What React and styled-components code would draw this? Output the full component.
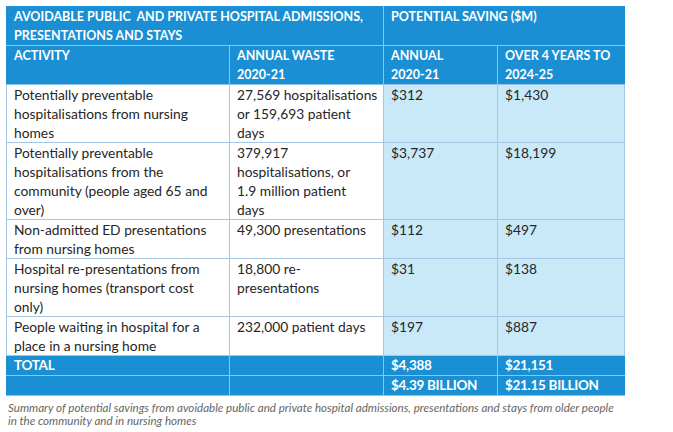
import React from "react";
import styled, { createGlobalStyle } from "styled-components";

const Global = createGlobalStyle`
  html, body { margin: 0; padding: 0; background: #ffffff; }
  body { font-family: Lato, "Liberation Sans", sans-serif; }
`;

const Page = styled.div`
  width: 673px;
  height: 432px;
  padding: 6px 0 0 6px;
  box-sizing: border-box;
`;

const Table = styled.table`
  width: 618px;
  border-collapse: collapse;
  table-layout: fixed;
  font-family: Lato, "Liberation Sans", sans-serif;
`;

const HeadCell = styled.th`
  background: #1b8fd3;
  color: #ffffff;
  font-weight: 700;
  font-size: 12.5px;
  line-height: 19px;
  text-align: left;
  vertical-align: top;
  padding: 0 5px 0 7px;
  border: 1px solid #8fc3ea;
  border-top-color: #1b8fd3;
  &:first-child { border-left-color: #1b8fd3; }
  &:last-child { border-right-color: #1b8fd3; }
`;

const Cell = styled.td`
  background: ${(p) => (p.$tint ? "#c9e9f9" : "#ffffff")};
  color: #262626;
  font-size: 13.8px;
  line-height: 19px;
  text-align: left;
  vertical-align: top;
  padding: 0 5px 0 7px;
  border: 1px solid #a7c6e4;
`;

const Line = styled.span`
  display: block;
`;

const TotalCell = styled.td`
  background: #1b8fd3;
  color: #ffffff;
  font-weight: 700;
  font-size: 13.5px;
  letter-spacing: -0.3px;
  line-height: 19px;
  text-align: left;
  vertical-align: top;
  padding: 0 5px 0 7px;
  border: 1px solid #8fc3ea;
  &:first-child { border-left-color: #1b8fd3; }
  &:last-child { border-right-color: #1b8fd3; }
`;

const Caption = styled.p`
  margin: 5px 0 0 2px;
  width: 610px;
  font-family: Lato, "Liberation Sans", sans-serif;
  font-style: italic;
  font-weight: 400;
  font-size: 11.6px;
  line-height: 13px;
  color: #666666;
`;

const rows = [
  {
    activity: "Potentially preventable hospitalisations from nursing homes",
    waste: ["27,569 hospitalisations or 159,693 patient days"],
    annual: "$312",
    four: "$1,430",
  },
  {
    activity:
      "Potentially preventable hospitalisations from the community (people aged 65 and over)",
    waste: ["379,917", "hospitalisations, or", "1.9 million patient", "days"],
    annual: "$3,737",
    four: "$18,199",
  },
  {
    activity: "Non-admitted ED presentations from nursing homes",
    waste: ["49,300 presentations"],
    annual: "$112",
    four: "$497",
  },
  {
    activity:
      "Hospital re-presentations from nursing homes (transport cost only)",
    waste: ["18,800 re-presentations"],
    annual: "$31",
    four: "$138",
  },
  {
    activity: "People waiting in hospital for a place in a nursing home",
    waste: ["232,000 patient days"],
    annual: "$197",
    four: "$887",
  },
];

export default function App() {
  return (
    <Page>
      <Global />
      <Table>
        <colgroup>
          <col style={{ width: 223 }} />
          <col style={{ width: 154 }} />
          <col style={{ width: 114 }} />
          <col style={{ width: 127 }} />
        </colgroup>
        <thead>
          <tr>
            <HeadCell colSpan={2}>
              AVOIDABLE PUBLIC&nbsp; AND PRIVATE HOSPITAL ADMISSIONS, PRESENTATIONS AND STAYS
            </HeadCell>
            <HeadCell colSpan={2}>POTENTIAL SAVING ($M)</HeadCell>
          </tr>
          <tr>
            <HeadCell>ACTIVITY</HeadCell>
            <HeadCell>
              ANNUAL WASTE
              <br />
              2020-21
            </HeadCell>
            <HeadCell>
              ANNUAL
              <br />
              2020-21
            </HeadCell>
            <HeadCell>
              OVER 4 YEARS TO
              <br />
              2024-25
            </HeadCell>
          </tr>
        </thead>
        <tbody>
          {rows.map((r) => (
            <tr key={r.activity}>
              <Cell>{r.activity}</Cell>
              <Cell>
                {r.waste.map((w) => (
                  <Line key={w}>{w}</Line>
                ))}
              </Cell>
              <Cell $tint>{r.annual}</Cell>
              <Cell $tint>{r.four}</Cell>
            </tr>
          ))}
          <tr>
            <TotalCell>TOTAL</TotalCell>
            <TotalCell />
            <TotalCell>$4,388</TotalCell>
            <TotalCell>$21,151</TotalCell>
          </tr>
          <tr>
            <TotalCell />
            <TotalCell />
            <TotalCell>$4.39 BILLION</TotalCell>
            <TotalCell>$21.15 BILLION</TotalCell>
          </tr>
        </tbody>
      </Table>
      <Caption>
        Summary of potential savings from avoidable public and private hospital
        admissions, presentations and stays from older people in the community
        and in nursing homes
      </Caption>
    </Page>
  );
}
